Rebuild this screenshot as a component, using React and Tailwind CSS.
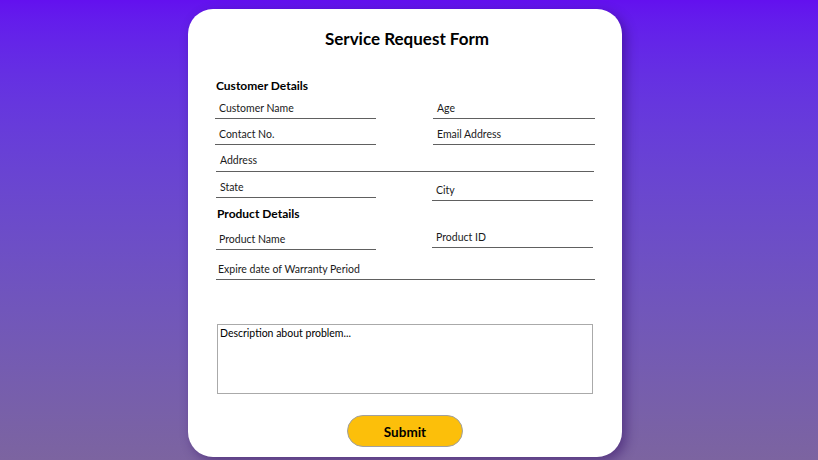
export default function App() {
  const font = { fontFamily: 'Lato, "Noto Sans", sans-serif' };
  const Field = ({ label, className = "" }) => (
    <div className={`border-b border-[#606060] flex items-center text-[10.5px] text-[#1a1a1a] ${className}`}>
      {label}
    </div>
  );
  return (
    <div
      className="w-full h-[460px] overflow-hidden bg-linear-to-b from-[#6310ef] to-[#7c64a0] pt-[9px] pl-[188px]"
      style={font}
    >
      <div className="w-[434px] h-[448px] bg-white rounded-[25px] shadow-[4px_4px_12px_rgba(40,0,90,0.45)] px-[27px] pt-[18px] flex flex-col">
        <h1 className="text-center pl-[4px] text-[17px] leading-[23px] font-bold text-black">Service Request Form</h1>
        <h2 className="mt-[28px] text-[12px] leading-[16px] font-bold text-black pl-[1px]">Customer Details</h2>

        <div className="mt-[6px] flex justify-between">
          <Field label="Customer Name" className="w-[161px] h-[19px] pl-[4px]" />
          <Field label="Age" className="w-[162px] h-[19px] pl-[4px]" />
        </div>
        <div className="mt-[6px] flex justify-between">
          <Field label="Contact No." className="w-[161px] h-[20px] pl-[4px]" />
          <Field label="Email Address" className="w-[162px] h-[20px] pl-[4px]" />
        </div>
        <Field label="Address" className="mt-[6px] ml-[1px] mr-[1px] h-[21px] pl-[4px]" />
        <div className="mt-[7px] flex justify-between items-start">
          <Field label="State" className="ml-[1px] w-[160px] h-[19px] pl-[4px]" />
          <Field label="City" className="mt-[3px] mr-[2px] w-[161px] h-[19px] pl-[4px]" />
        </div>

        <h2 className="mt-[5px] text-[12px] leading-[16px] font-bold text-black pl-[2px]">Product Details</h2>
        <div className="mt-[6px] flex justify-between items-start">
          <Field label="Product Name" className="mt-[3px] ml-[1px] w-[160px] h-[19px] pl-[3px]" />
          <Field label="Product ID" className="mr-[2px] w-[161px] h-[20px] pl-[4px]" />
        </div>
        <Field label="Expire date of Warranty Period" className="mt-[11px] ml-[1px] h-[19px] pl-[2px]" />

        <div className="mt-[44px] mx-[2px] h-[70px] border border-[#aaaaaa] px-[2px] pt-[1px] text-[10.5px] leading-[14px] text-black">
          Description about problem...
        </div>

        <div className="mt-[21px] flex justify-center">
          <button className="w-[116px] h-[32px] rounded-full bg-[#fcbf0a] border border-[#a0a0a0] pt-[2px] text-[13.5px] font-bold text-black">
            Submit
          </button>
        </div>
      </div>
    </div>
  );
}
